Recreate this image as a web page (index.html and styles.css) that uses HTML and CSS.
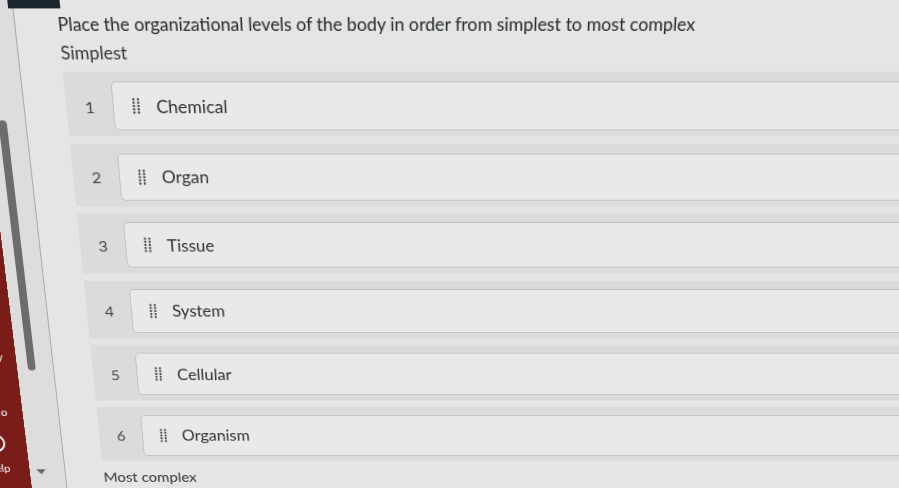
FILE: index.html
```html
<!DOCTYPE html>
<html lang="en">
<head>
  <meta charset="UTF-8">
  <meta name="viewport" content="width=device-width, initial-scale=1.0">
  <title>Ordering Question</title>
  <link rel="stylesheet" href="styles.css">
</head>
<body>
  <div class="screen">
    <div class="top-tab"></div>
    <nav class="global-nav">
      <span class="nav-label nav-history">History</span>
      <svg class="nav-icon nav-studio-icon" width="22" height="22" viewBox="0 0 22 22"><path d="M3 19 L9 3 L13 3 L19 19" fill="none" stroke="#fff" stroke-width="2"/></svg>
      <span class="nav-label nav-studio">Studio</span>
      <svg class="nav-icon nav-help-icon" width="22" height="22" viewBox="0 0 22 22"><circle cx="11" cy="11" r="9.5" fill="none" stroke="#fff" stroke-width="2"/></svg>
      <span class="nav-label nav-help">Help</span>
    </nav>
    <div class="nav-scroll">
      <div class="thumb"></div>
      <span class="arrow"></span>
    </div>
    <main class="quiz">
      <p class="prompt">Place the organizational levels of the body in order from simplest to most complex</p>
      <p class="end-label">Simplest</p>
      <ol class="order-list">
        <li class="order-row"><span class="num">1</span><div class="card"><svg class="handle" width="8" height="16" viewBox="0 0 8 16"><g fill="#454545"><circle cx="1.4" cy="1.5" r="1.15"/><circle cx="5.8" cy="1.5" r="1.15"/><circle cx="1.4" cy="4.75" r="1.15"/><circle cx="5.8" cy="4.75" r="1.15"/><circle cx="1.4" cy="8" r="1.15"/><circle cx="5.8" cy="8" r="1.15"/><circle cx="1.4" cy="11.25" r="1.15"/><circle cx="5.8" cy="11.25" r="1.15"/><circle cx="1.4" cy="14.5" r="1.15"/><circle cx="5.8" cy="14.5" r="1.15"/></g></svg><span class="label">Chemical</span></div></li>
        <li class="order-row"><span class="num">2</span><div class="card"><svg class="handle" width="8" height="16" viewBox="0 0 8 16"><g fill="#454545"><circle cx="1.4" cy="1.5" r="1.15"/><circle cx="5.8" cy="1.5" r="1.15"/><circle cx="1.4" cy="4.75" r="1.15"/><circle cx="5.8" cy="4.75" r="1.15"/><circle cx="1.4" cy="8" r="1.15"/><circle cx="5.8" cy="8" r="1.15"/><circle cx="1.4" cy="11.25" r="1.15"/><circle cx="5.8" cy="11.25" r="1.15"/><circle cx="1.4" cy="14.5" r="1.15"/><circle cx="5.8" cy="14.5" r="1.15"/></g></svg><span class="label">Organ</span></div></li>
        <li class="order-row"><span class="num">3</span><div class="card"><svg class="handle" width="8" height="16" viewBox="0 0 8 16"><g fill="#454545"><circle cx="1.4" cy="1.5" r="1.15"/><circle cx="5.8" cy="1.5" r="1.15"/><circle cx="1.4" cy="4.75" r="1.15"/><circle cx="5.8" cy="4.75" r="1.15"/><circle cx="1.4" cy="8" r="1.15"/><circle cx="5.8" cy="8" r="1.15"/><circle cx="1.4" cy="11.25" r="1.15"/><circle cx="5.8" cy="11.25" r="1.15"/><circle cx="1.4" cy="14.5" r="1.15"/><circle cx="5.8" cy="14.5" r="1.15"/></g></svg><span class="label">Tissue</span></div></li>
        <li class="order-row"><span class="num">4</span><div class="card"><svg class="handle" width="8" height="16" viewBox="0 0 8 16"><g fill="#454545"><circle cx="1.4" cy="1.5" r="1.15"/><circle cx="5.8" cy="1.5" r="1.15"/><circle cx="1.4" cy="4.75" r="1.15"/><circle cx="5.8" cy="4.75" r="1.15"/><circle cx="1.4" cy="8" r="1.15"/><circle cx="5.8" cy="8" r="1.15"/><circle cx="1.4" cy="11.25" r="1.15"/><circle cx="5.8" cy="11.25" r="1.15"/><circle cx="1.4" cy="14.5" r="1.15"/><circle cx="5.8" cy="14.5" r="1.15"/></g></svg><span class="label">System</span></div></li>
        <li class="order-row"><span class="num">5</span><div class="card"><svg class="handle" width="8" height="16" viewBox="0 0 8 16"><g fill="#454545"><circle cx="1.4" cy="1.5" r="1.15"/><circle cx="5.8" cy="1.5" r="1.15"/><circle cx="1.4" cy="4.75" r="1.15"/><circle cx="5.8" cy="4.75" r="1.15"/><circle cx="1.4" cy="8" r="1.15"/><circle cx="5.8" cy="8" r="1.15"/><circle cx="1.4" cy="11.25" r="1.15"/><circle cx="5.8" cy="11.25" r="1.15"/><circle cx="1.4" cy="14.5" r="1.15"/><circle cx="5.8" cy="14.5" r="1.15"/></g></svg><span class="label">Cellular</span></div></li>
        <li class="order-row"><span class="num">6</span><div class="card"><svg class="handle" width="8" height="16" viewBox="0 0 8 16"><g fill="#454545"><circle cx="1.4" cy="1.5" r="1.15"/><circle cx="5.8" cy="1.5" r="1.15"/><circle cx="1.4" cy="4.75" r="1.15"/><circle cx="5.8" cy="4.75" r="1.15"/><circle cx="1.4" cy="8" r="1.15"/><circle cx="5.8" cy="8" r="1.15"/><circle cx="1.4" cy="11.25" r="1.15"/><circle cx="5.8" cy="11.25" r="1.15"/><circle cx="1.4" cy="14.5" r="1.15"/><circle cx="5.8" cy="14.5" r="1.15"/></g></svg><span class="label">Organism</span></div></li>
      </ol>
      <p class="end-label end-bottom">Most complex</p>
    </main>
  </div>
</body>
</html>
```

FILE: styles.css
```css
body {
  margin: 0;
  overflow: hidden;
  background: #e4e5e4;
  font-family: Lato, "Noto Sans", sans-serif;
  color: #2f3336;
}
/* photographed at an angle: tilt the whole screen */
.screen {
  position: relative;
  display: flex;
  width: 1060px;
  height: 530px;
  margin-left: -60px;
  transform: perspective(1200px) rotateX(-18.3deg) skewX(5.5deg);
  transform-origin: 140px 244px;
}
.top-tab {
  position: absolute;
  left: 95px;
  top: 0;
  width: 49px;
  height: 11px;
  background: #1b2530;
}
.global-nav {
  width: 62px;
  flex-shrink: 0;
  background: #7a1c17;
  color: #fff;
  display: flex;
  flex-direction: column;
  align-items: center;
  padding: 360px 4px 0 0;
  box-sizing: border-box;
}
.nav-label {
  font-size: 12px;
  line-height: 14px;
}
.nav-studio-icon { margin-top: 22px; }
.nav-studio { margin-top: 5px; }
.nav-help-icon { margin-top: 18px; }
.nav-help { margin-top: 12px; }
.nav-scroll {
  width: 37px;
  flex-shrink: 0;
  background: #dcdddc;
  display: flex;
  flex-direction: column;
  padding: 118px 0 0;
  box-sizing: border-box;
}
.thumb {
  width: 8px;
  height: 264px;
  margin-left: 11px;
  border-radius: 4px;
  background: #6b6c6b;
}
.arrow {
  margin: 115px 0 0 7px;
  width: 0;
  height: 0;
  border-left: 5px solid transparent;
  border-right: 5px solid transparent;
  border-top: 6px solid #666;
}
.quiz {
  flex: 1;
  border-left: 1px solid #a9aaa9;
  padding: 14px 0 0 40px;
}
.prompt {
  margin: 0;
  font-size: 16.8px;
  line-height: 24px;
  color: #24282b;
}
.end-label {
  margin: 4.4px 0 0;
  font-size: 17px;
  line-height: 22px;
  color: #33373a;
}
.end-bottom {
  margin-top: 10px;
  font-size: 16px;
  line-height: 18px;
}
.order-list {
  list-style: none;
  margin: 7px 0 0;
  padding: 0;
  display: flex;
  flex-direction: column;
  gap: 7.5px;
}
.order-row {
  display: flex;
  height: 63px;
  box-sizing: border-box;
  padding: 8.7px 0 6.3px 1px;
  background: #dadbda;
}
.num {
  width: 44px;
  align-self: center;
  text-align: center;
  font-size: 16px;
  color: #44474a;
}
.card {
  flex: 1;
  display: flex;
  align-items: center;
  gap: 15px;
  padding-left: 18px;
  background: #e8e9e8;
  border: 1px solid #c1c2c1;
  border-radius: 5px;
}
.label {
  font-size: 17px;
  color: #2e3235;
}
```
